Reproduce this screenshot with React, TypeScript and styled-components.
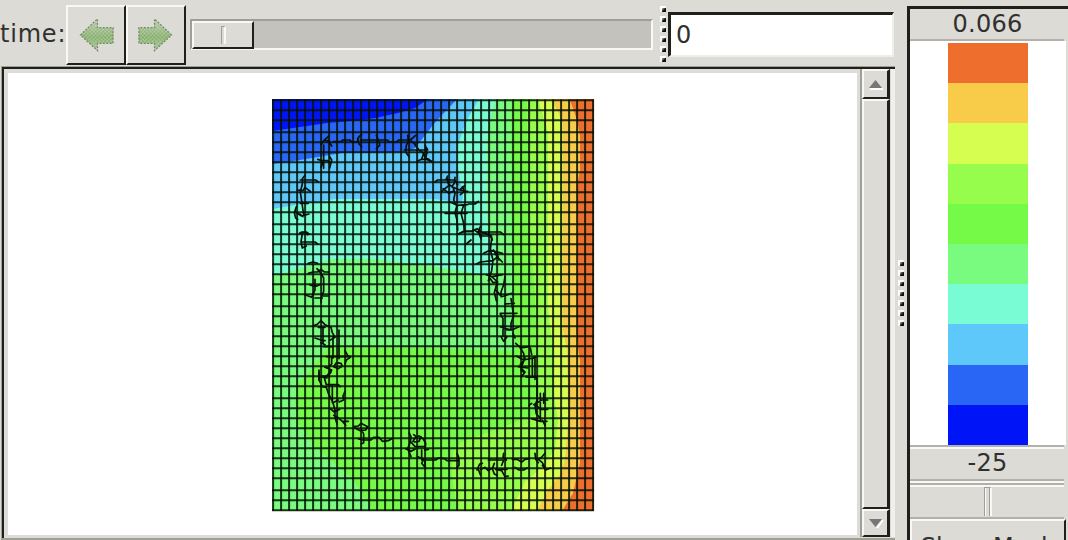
import React from "react";
import styled, { createGlobalStyle } from "styled-components";

const face = "#dcdbd6";
const ink = "#1f1f1b";
const mid = "#a09f96";
const light = "#f8f8f6";

const Global = createGlobalStyle`
  * { box-sizing: border-box; }
  body { margin: 0; background: ${face}; font-family: "DejaVu Sans", sans-serif; font-size: 24px; color: #303030; }
`;

const Window = styled.div`
  display: flex; width: 1068px; height: 540px; overflow: hidden; background: ${face};
`;
const Main = styled.div`
  display: flex; flex-direction: column; width: 895px; height: 540px; flex: none;
`;
const Toolbar = styled.div`
  display: flex; align-items: flex-start; height: 66px; flex: none;
`;
const TimeLabel = styled.span`
  width: 66px; margin-top: 20px; line-height: 28px; white-space: nowrap; letter-spacing: 0.8px;
`;
const ToolButton = styled.button<{ $w: number; $pad: number }>`
  width: ${(p) => p.$w}px; height: 60px; margin-top: 5px; padding: 0 0 0 ${(p) => p.$pad}px; background: ${face};
  border: 2px solid; border-color: ${light} ${ink} ${ink} ${light};
  display: flex; align-items: center; justify-content: flex-start;
`;
const Track = styled.div`
  width: 463px; height: 31px; margin: 19px 0 0 4px; background: #c3c2bd;
  border: 2px solid; border-color: ${mid} ${light} ${light} ${mid};
`;
const TrackThumb = styled.div`
  width: 62px; height: 28px; background: ${face}; display: flex; align-items: center; justify-content: center;
  border: 2px solid; border-color: ${light} ${ink} ${ink} ${light};
`;
const Notch = styled.i<{ $h: number; $w: number }>`
  width: ${(p) => p.$w}px; height: ${(p) => p.$h}px;
  border: solid ${mid}; border-width: 1px 0 0 1px; border-right: 2px solid ${light};
`;
const HGrip = styled.div`
  display: flex; flex-direction: column; width: 8px; margin: 6px 0 0 7px;
`;
const Dot = styled.i`
  width: 6px; height: 6px; margin-bottom: 4px; flex: none;
  background:
    linear-gradient(135deg, #a5a59e 10%, #101010 55%) 2px 2px / 4px 4px no-repeat,
    linear-gradient(135deg, #fff 45%, ${face} 70%);
`;
const Field = styled.div`
  width: 226px; height: 45px; margin: 12px 0 0 0; background: #fff; padding: 6px 0 0 5px; line-height: 29px;
  border: solid; border-width: 3px 2px 2px 3px; border-color: ${ink} #eeeeeb #eeeeeb ${ink};
`;
const Frame = styled.div`
  display: flex; flex: 1; min-height: 0; margin-left: 1px;
  border: solid ${mid}; border-width: 1px 0 2px 1px;
`;
const Inner = styled.div`
  display: flex; flex: 1; border: solid ${ink}; border-width: 2px 0 0 2px;
`;
const Canvas = styled.div`
  width: 856px; flex: none; background: #fff; border: solid #dddcd8; border-width: 4px 3px 3px 4px;
  padding: 25px 0 0 263px;
`;
const Scroll = styled.div`
  width: 30px; display: flex; flex-direction: column; background: ${face}; border-left: 2px solid ${mid};
  box-shadow: 1px 0 0 ${face}, 5px 0 0 #f0f0ed; margin-bottom: 1px;
`;
const ScrollPiece = styled.div<{ $h: number }>`
  height: ${(p) => p.$h}px; flex: none; background: ${face}; display: flex; align-items: center; justify-content: center;
  border: solid; border-width: 2px 3px 2px 2px; border-color: ${light} ${ink} ${ink} ${light};
`;
const Splitter = styled.div`
  width: 12px; flex: none; display: flex; flex-direction: column; padding: 260px 0 0 3px;
`;
const Side = styled.div`
  flex: 1; margin-top: 6px; display: flex; flex-direction: column; border: solid ${ink}; border-width: 3px 0 0 3px;
`;
const Value = styled.div<{ $h: number; $lift?: number }>`
  height: ${(p) => p.$h}px; flex: none; margin-right: 4px; text-align: center;
  line-height: ${(p) => p.$h - (p.$lift ?? 0)}px; letter-spacing: 0.3px; padding-left: 1px;
  border-bottom: 2px solid #b1b0aa;
`;
const Legend = styled.div`
  height: 404px; flex: none; margin-right: 2px; background: #fff; padding: 2px 0 0 38px;
`;
const Band = styled.div<{ $c: string }>`
  width: 80px; height: 40.2px; background: ${(p) => p.$c};
`;
const LowerValue = styled.div`
  flex: none; box-shadow: inset -4px 0 0 ${face}, inset 0 2px 0 #b1b0aa, inset 0 4px 0 ${light};
`;
const Slider = styled.div`
  height: 36px; flex: none; margin-right: 4px; display: flex; justify-content: center; padding: 2px 0 0 2px;
  border: solid #b1b0aa; border-width: 2px 0; box-shadow: inset 0 2px 0 ${light}, 0 -2px 0 ${light};
  margin-top: 2px;
`;
const Handle = styled.i`
  width: 8px; height: 29px; border: 1px solid ${mid}; border-width: 1px 0 0 1px; border-right: 2px solid ${light};
  background: linear-gradient(90deg, ${light} 0 1px, ${face} 1px 4px, ${mid} 4px);
`;
const MeshButton = styled.button`
  height: 50px; width: 156px; flex: none; margin: 0; padding: 13px 0 0 1px; background: ${face};
  font: inherit; line-height: 26px; color: #303030; white-space: nowrap; display: flex; justify-content: center; align-items: flex-start;
  border: 2px solid; border-color: ${light} ${ink} ${ink} ${light};
`;

const bands = ["#ee6e2d", "#f8cc48", "#d6fe51", "#96fd4d", "#76fa48", "#78fb7f", "#79fcd3", "#5ec8fa", "#2966f5", "#0015f7"];

const regions: [string, string][] = [
  [bands[0], "272,99 594,99 594,511 272,511"],
  [bands[1], "272,99 570,99 571,103 577,120 580,136 580,170 577,187 577,340 580,361 580,463 573,493 562,511 272,511"],
  [bands[2], "272,99 551,99 555,106 563,123 563,330 567,350 568,420 565,460 560,475 548,490 537,511 272,511"],
  [bands[3], "272,99 538,99 548,133 548,310 552,340 553,390 558,420 555,450 542,467 525,482 511,511 272,511"],
  [bands[4], "272,99 527,99 529,220 535,297 538,370 540,413 508,425 462,442 453,452 452,475 457,511 272,511"],
  [bands[5], "272,99 511,99 511,235 515,330 515,351 425,348 328,347 318,360 305,377 298,383 295,403 298,423 315,447 328,458 352,478 373,511 272,511"],
  [bands[6], "272,99 496,99 490,120 487,140 487,217 488,233 495,243 494,270 488,276 468,272 425,265 372,259 332,259 302,268 272,276"],
  [bands[7], "272,99 479,99 468,118 463,130 458,145 457,163 460,180 463,193 462,204 450,201 435,199 335,199 308,203 272,209"],
  [bands[8], "272,99 457,99 442,115 433,125 426,134 415,148 403,152 342,153 300,160 272,164"],
  [bands[9], "272,99 428,99 415,108 398,113 375,118 345,121.5 327,123 300,127 272,131"],
];

const cols = Array.from({ length: 41 }, (_, i) => 273 + i * 8);
const rows = [100, 110, 120, 132, 142, 152, 162, 172, 182, 192, 202, 212, 224, 234, 244, 254, 264, 274, 284, 294, 306, 316, 326, 336, 346, 356, 366, 376, 386, 398, 408, 418, 428, 438, 448, 458, 468, 478, 490, 500, 510];

// Fracture traces, in thirds of a pixel from each tile's origin.
const traces: [number, number, string][] = [
  [265, 90, "M168 164L176 152L192 138M180 151L192 155L200 168L190 150M176 165V235M205 155H228L234 150H254L262 156H276L282 140L290 134M278 145L282 162L290 170M286 150H340L334 136M342 150L344 166L334 176M346 150H366L374 156H394L402 150H432L424 166L422 186L432 200M428 136L430 150M436 150L452 136M440 154L452 164M418 180H488L480 166M450 164L462 180L476 190L470 208L456 214M476 190L482 206L500 216M470 208H492M158 208L172 212H188L196 220M174 216L168 232M194 200L200 210L194 234M120 256L112 266V282L106 306L116 374M106 270H152L160 276M98 300L114 302L120 292L136 304M106 340H130M94 350L88 368L92 384L98 388M90 366L110 378L132 372M104 372L114 380M104 430L112 426H124L132 432"],
  [425, 90, "M0 176L6 188L2 204L20 214M30 276L38 270H62L68 258M66 264L70 282L84 292L104 300L118 288M90 262L88 280L80 290M64 270H90L98 284M50 304L60 296L72 286M54 296L72 310L84 304M84 292L90 310L86 330L94 346M104 300L128 304M112 290L118 304L106 314M76 336L96 346L128 344M96 346L90 368L96 390L98 420M116 346L108 370L116 400L118 426M60 370H126M130 342H150L160 334M100 432L116 424H140L156 416L176 430M166 410L160 424L168 446M156 426H226L236 434M178 428L198 438L202 450"],
  [265, 230, "M106 8H120L128 14M112 10L108 36L112 54L124 48M108 36H150L158 42M130 100L144 96L158 100M130 130L144 126L158 126L168 118L178 126H192M156 116L168 130L176 144V184L168 206V218M150 148V180L142 198M134 164L150 170L164 164M120 194L140 202L146 188M150 204H172M176 198H190M144 288L158 282L168 272L180 284L198 292L202 308L210 322L196 330M160 292H180M150 324L168 330L180 332M174 294V340M168 338L180 344M204 320V384M222 300V386M176 350H204M240 362L248 376L256 382L244 390L240 402M184 380H256M200 380V402L188 414M214 398L228 400L232 408L220 416L206 410L214 398M180 412L200 420L196 430L180 440M162 426V450M172 438L192 440"],
  [425, 230, "M100 12L120 4H140L148 0L160 8L168 20M124 42L138 30M168 18H200M190 6L200 26L196 60L204 90L200 122L190 152M176 70L196 60L232 70M206 60L216 80L232 96M154 102L166 96L204 92L218 80M216 70L222 90M184 134L202 140L232 134M200 140L218 156L204 158L196 146M240 140L236 164L228 186V200M216 158L208 188L214 212M214 182L230 200L260 190M240 222L268 220M258 206L262 232L266 256L258 280V300L246 300M226 250H276M226 252L234 266V318M226 290L242 296L260 300L282 290M228 320L236 334L246 320M264 310L270 324M272 340L288 354L312 350M286 354L296 370L298 390L286 404M274 378L296 390L332 382M316 354L320 374M300 384L288 414L300 426L290 440M280 410L308 414M330 380V448M322 384V440M304 440L336 442"],
  [265, 370, "M162 0V30L172 50L184 52L190 70L204 98L210 120V142L216 162M196 0L188 16L178 24L184 44M168 20L186 24M184 44H220L226 50M202 46V98M240 64L234 78L236 90L222 96M204 98L220 90M196 116L208 126L224 118M206 136L218 142L232 154H250M232 154L242 166M266 170L280 168L288 160L308 170L302 180L286 182L270 174M290 180L296 192V218L288 222M280 206L292 210H318L326 202H342L352 214L370 212L380 206M432 188L438 200L436 216L428 236L438 260M444 214L452 202L462 198L474 206M448 216L462 214L468 200M446 194L454 200M438 216L450 230H480M474 206L482 220L480 240M422 236L438 244L450 238M458 260L476 268L470 280L480 292M470 240V270"],
  [425, 370, "M288 0L296 6M302 20L336 22V80M346 70V150M356 70V100M338 86L330 106L334 132L346 144M320 100L312 106M326 104L350 90H368M332 104L346 118H368M320 146L346 154H366M352 150L360 166M0 240L10 238M0 290V270H32L40 264L58 266L66 272H100M96 250L102 264V286L96 292M156 300L164 282L172 280M160 298L166 314M168 298L180 292L190 302L204 292M208 280L202 296L208 312L216 316M190 270H236L230 286M236 250L234 262L244 270M212 298L230 302L240 320L250 318M224 298H246M262 268H276L290 276L300 268L312 266M270 292L282 300H296L306 294M330 250L332 268L340 278M360 250L350 262L340 268L352 278L360 292M352 286L362 300L376 294"],
];

function Plot() {
  return (
    <svg width="324" height="414" viewBox="271 98 324 414" style={{ display: "block" }}>
      <rect x="272" y="99" width="322" height="412" fill="#555" />
      {regions.map(([fill, points]) => <polygon key={fill} fill={fill} points={points} />)}
      <g stroke="#071107" strokeOpacity="0.86" strokeWidth="2">
        {cols.map((x) => <line key={x} x1={x + 0.1} x2={x + 0.1} y1="99.5" y2="511" />)}
        {rows.map((y) => <line key={y} x1="272" x2="594" y1={y + 0.3} y2={y + 0.3} />)}
      </g>
      {traces.map(([x, y, d]) => (
        <path key={d} transform={`translate(${x} ${y}) scale(.33333)`} d={d} fill="none" stroke="#061006" strokeWidth="5" strokeLinejoin="round" strokeLinecap="round" />
      ))}
    </svg>
  );
}

function Arrow({ flip }: { flip?: boolean }) {
  const id = flip ? "next" : "prev";
  return (
    <svg width="36" height="36" viewBox="0 0 37 37">
      <defs>
        <linearGradient id={`${id}g`} x1="0" x2="0" y1="0" y2="1">
          <stop offset="0" stopColor="#bccab1" /><stop offset=".58" stopColor="#7dac62" /><stop offset="1" stopColor="#a5c194" />
        </linearGradient>
        <pattern id={`${id}p`} width="4" height="4" patternUnits="userSpaceOnUse">
          <path d="M0 0h2v2H0zM2 2h2v2H2z" fill="#e1e3d9" fillOpacity=".42" />
        </pattern>
      </defs>
      <g transform={flip ? "translate(37 0) scale(-1 1)" : undefined}>
        <path d="M1.500 18.500L19 2V11H35V27H19V34.500Z" fill={`url(#${id}g)`} />
        <path d="M1.500 18.500L19 2V11H35V27H19V34.500Z" fill={`url(#${id}p)`} />
        <path d="M1.500 18.500L19 2V11H35V27H19V34.500Z" fill="none" stroke="#6f8a64" strokeWidth="1.300" strokeDasharray="2 1.500" />
      </g>
    </svg>
  );
}

const Triangle = ({ down }: { down?: boolean }) => (
  <svg width="16" height="12" viewBox="0 0 16 12">
    {down
      ? <><path d="M9 11L15 3" stroke="#fff" strokeWidth="2" /><path d="M1 2H14L7.500 10Z" fill="#777" /></>
      : <><path d="M2 11H15" stroke="#fff" strokeWidth="2" /><path d="M1 10H14L7.500 2Z" fill="#777" /></>}
  </svg>
);

export default function App() {
  return (
    <>
      <Global />
      <Window>
        <Main>
          <Toolbar>
            <TimeLabel>time:</TimeLabel>
            <ToolButton $w={60} $pad={11}><Arrow /></ToolButton>
            <ToolButton $w={60} $pad={9}><Arrow flip /></ToolButton>
            <Track><TrackThumb><Notch $w={5} $h={18} /></TrackThumb></Track>
            <HGrip>{[0, 1, 2, 3, 4, 5].map((i) => <Dot key={i} />)}</HGrip>
            <Field>0</Field>
          </Toolbar>
          <Frame>
            <Inner>
              <Canvas><Plot /></Canvas>
              <Scroll>
                <ScrollPiece $h={30}><Triangle /></ScrollPiece>
                <ScrollPiece $h={410} />
                <ScrollPiece $h={28}><Triangle down /></ScrollPiece>
              </Scroll>
            </Inner>
          </Frame>
        </Main>
        <Splitter>{[0, 1, 2, 3, 4, 5, 6].map((i) => <Dot key={i} />)}</Splitter>
        <Side>
          <Value $h={32} $lift={2}>0.066</Value>
          <Legend>{bands.map((c) => <Band key={c} $c={c} />)}</Legend>
          <LowerValue><Value $h={36} $lift={-1}>-25</Value></LowerValue>
          <Slider><Handle /></Slider>
          <MeshButton>Show Mesh</MeshButton>
        </Side>
      </Window>
    </>
  );
}
